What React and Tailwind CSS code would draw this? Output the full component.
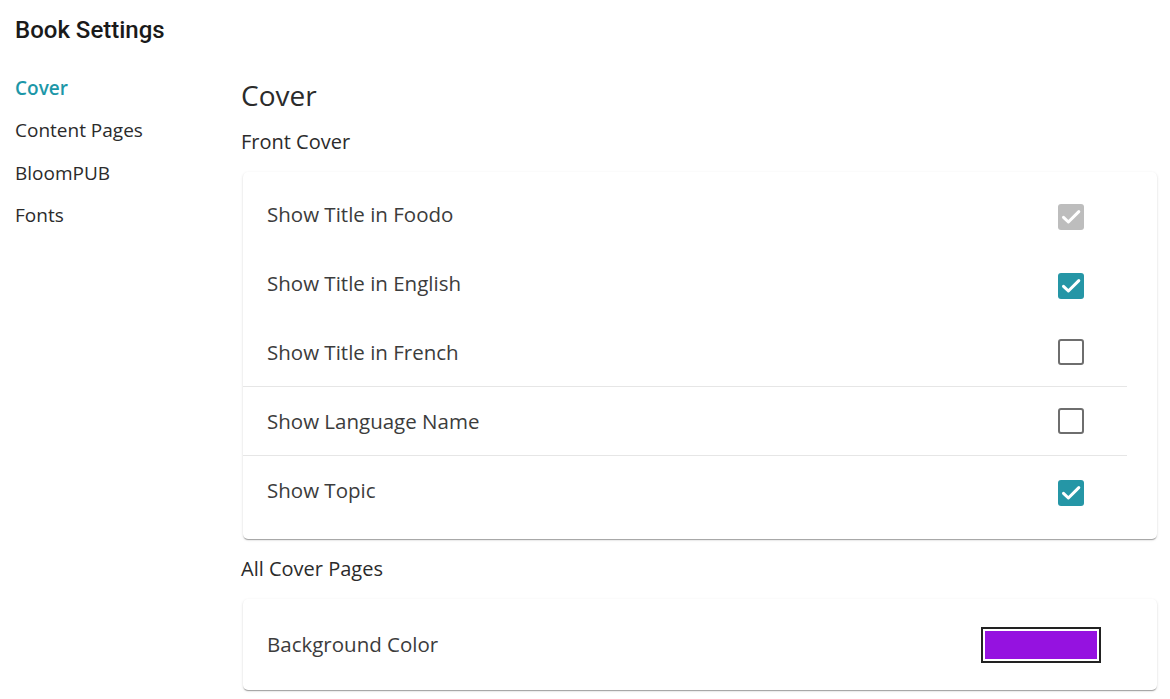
import React, { useState } from "react";

const font = { fontFamily: '"Open Sans", "Noto Sans", sans-serif' };

function CheckBox({ checked, disabled, onChange }) {
  if (checked) {
    return (
      <button
        type="button"
        onClick={onChange}
        className={`w-[26px] h-[26px] rounded-[3px] flex items-center justify-center ${
          disabled ? "bg-[#bdbdbd]" : "bg-[#2596a6]"
        }`}
      >
        <svg width="24" height="24" viewBox="0 0 24 24">
          <path d="M4.5 12.3l4.9 4.7L19.8 6.6" fill="none" stroke="white" strokeWidth="3" strokeLinecap="round" strokeLinejoin="round" />
        </svg>
      </button>
    );
  }
  return (
    <button
      type="button"
      onClick={onChange}
      className="w-[26px] h-[26px] rounded-[3px] border-2 border-[#6e6e6e] bg-white"
    />
  );
}

function Row({ label, divider, children }) {
  return (
    <div className={`h-[69px] mr-[30px] pl-6 pr-[43px] flex items-center justify-between ${divider ? "border-b border-[#e6e6e6]" : ""}`}>
      <span className="text-[20.5px] text-[#3c3c3c]">{label}</span>
      <div className="pt-1">{children}</div>
    </div>
  );
}

export default function App() {
  const [settings, setSettings] = useState({
    foodo: true,
    english: true,
    french: false,
    language: false,
    topic: true,
  });

  const toggle = (key) => setSettings({ ...settings, [key]: !settings[key] });

  const rows = [
    { key: "foodo", label: "Show Title in Foodo", disabled: true },
    { key: "english", label: "Show Title in English" },
    { key: "french", label: "Show Title in French", divider: true },
    { key: "language", label: "Show Language Name", divider: true },
    { key: "topic", label: "Show Topic" },
  ];

  return (
    <div className="min-h-screen bg-white pl-[15px] pr-[13px]" style={font}>
      <h1
        className="pt-[13px] h-[62px] leading-[34px] text-[24px] font-medium text-[#1a1a1a]"
        style={{ fontFamily: 'Roboto, "Liberation Sans", sans-serif' }}
      >
        Book Settings
      </h1>
      <div className="flex">
        {/* Left nav */}
        <nav className="w-[226px] flex flex-col text-[19px] text-[#2b2b2b]">
          <span className="h-[42.3px] leading-[52px] font-semibold text-[#1d97a8]">Cover</span>
          <span className="h-[42.3px] leading-[52px]">Content Pages</span>
          <span className="h-[42.3px] leading-[52px]">BloomPUB</span>
          <span className="h-[42.3px] leading-[52px]">Fonts</span>
        </nav>

        {/* Main */}
        <div className="flex-1">
          <h2 className="text-[28px] text-[#2b2b2b] leading-[36px] mt-[15px]">Cover</h2>
          <h3 className="text-[20px] text-[#2b2b2b] mt-[15px] leading-[28px]">Front Cover</h3>
          <div className="ml-[2px] mt-[16px] bg-white rounded-[5px] pt-2 pb-[14px] shadow-[0_2px_1px_-1px_rgba(0,0,0,0.2),0_1px_1px_0_rgba(0,0,0,0.14),0_1px_3px_0_rgba(0,0,0,0.12)]">
            {rows.map((r) => (
              <Row key={r.key} label={r.label} divider={r.divider}>
                <CheckBox
                  checked={settings[r.key]}
                  disabled={r.disabled}
                  onChange={() => !r.disabled && toggle(r.key)}
                />
              </Row>
            ))}
          </div>

          <h3 className="text-[20px] text-[#2b2b2b] mt-[16px] leading-[28px]">All Cover Pages</h3>
          <div className="ml-[2px] mt-[16px] h-[91px] bg-white rounded-[5px] pl-6 pr-[56px] flex items-center justify-between shadow-[0_2px_1px_-1px_rgba(0,0,0,0.2),0_1px_1px_0_rgba(0,0,0,0.14),0_1px_3px_0_rgba(0,0,0,0.12)]">
            <span className="text-[20.5px] text-[#3c3c3c]">Background Color</span>
            <div className="w-[120px] h-[36px] border-2 border-[#222] p-[2px] bg-white">
              <div className="w-full h-full bg-[#9512e0]" />
            </div>
          </div>
        </div>
      </div>
    </div>
  );
}
